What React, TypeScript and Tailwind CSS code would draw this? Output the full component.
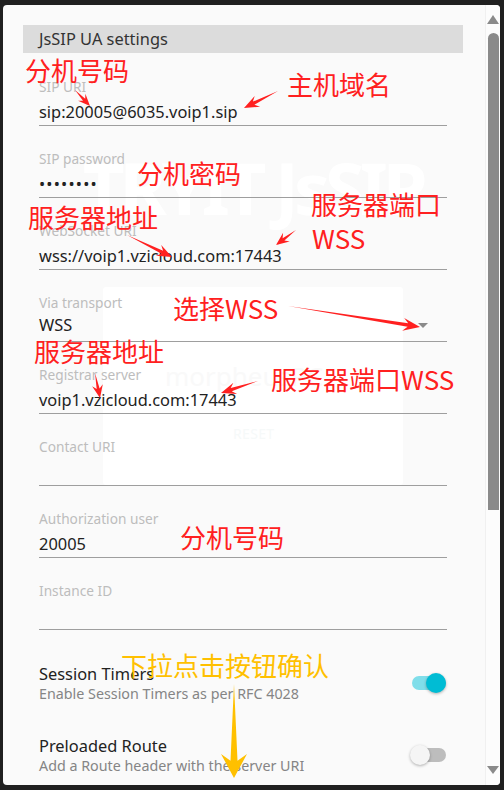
import React from "react";

const LATIN = { fontFamily: '"Noto Sans", "Liberation Sans", sans-serif' };
const CJK = { fontFamily: '"Noto Sans CJK SC", "Noto Sans", sans-serif' };

function arrowPoints(x1: number, y1: number, x2: number, y2: number, hl: number, hw: number, sw: number) {
  const dx = x2 - x1;
  const dy = y2 - y1;
  const len = Math.hypot(dx, dy);
  const ux = dx / len;
  const uy = dy / len;
  const nx = -uy;
  const ny = ux;
  const bx = x2 - ux * hl * 0.72;
  const by = y2 - uy * hl * 0.72;
  const hx = x2 - ux * hl;
  const hy = y2 - uy * hl;
  const pts = [
    [x1, y1],
    [bx + (nx * sw) / 2, by + (ny * sw) / 2],
    [hx + (nx * hw) / 2, hy + (ny * hw) / 2],
    [x2, y2],
    [hx - (nx * hw) / 2, hy - (ny * hw) / 2],
    [bx - (nx * sw) / 2, by - (ny * sw) / 2],
  ];
  return pts.map((p) => p[0].toFixed(1) + "," + p[1].toFixed(1)).join(" ");
}

const redArrows: [number, number, number, number, number, number, number][] = [
  [75, 90, 90, 106, 12, 10, 3],
  [278, 91, 244, 108, 15, 12, 3.5],
  [127, 235, 172, 257, 15, 12, 3.5],
  [296, 230, 276, 245, 13, 11, 3],
  [288, 306, 420, 327, 17, 13, 3.5],
  [95, 373, 100, 398, 13, 11, 3],
  [258, 381, 221, 393, 15, 12, 3.5],
];

function Field({ label, value, select, dots }: { label: string; value?: string; select?: boolean; dots?: boolean }) {
  return (
    <div className="relative flex h-[72px] flex-col border-b border-[#9e9e9e] pt-[25px]">
      <div className="h-[16px] whitespace-nowrap text-[13.7px] leading-[16px] text-[#bdbdbd]">{label}</div>
      {select ? (
        <div className="mt-[4px] flex h-[20px] items-center justify-between text-[16.4px] leading-[20px] text-[#222]">
          <span>{value}</span>
          <span className="mr-[19px] h-0 w-0 border-x-[5px] border-t-[5px] border-x-transparent border-t-[#8a8a8a]" />
        </div>
      ) : (
        <div
          className={
            "mt-[7px] h-[20px] whitespace-nowrap text-[16.4px] leading-[20px] text-[#222] " +
            (dots ? "tracking-[1.2px]" : "")
          }
        >
          {value}
        </div>
      )}
    </div>
  );
}

function Toggle({ on }: { on: boolean }) {
  return (
    <div className="relative mr-[1px] h-[20px] w-[36px]">
      <div className={"absolute left-[2px] top-[3px] h-[14px] w-[34px] rounded-full " + (on ? "bg-[#80deea]" : "bg-[#bdbdbd]")} />
      <div
        className={
          "absolute top-0 h-[20px] w-[20px] rounded-full shadow-[0_1px_3px_rgba(0,0,0,0.3)] " +
          (on ? "left-[16px] bg-[#00bcd4]" : "left-[0px] bg-[#f5f5f5]")
        }
      />
    </div>
  );
}

function SwitchRow({ title, sub, on }: { title: string; sub: string; on: boolean }) {
  return (
    <div className="flex h-[72px] items-start pt-[34px]">
      <div className="flex flex-1 flex-col">
        <div className="h-[20px] whitespace-nowrap text-[16.4px] leading-[20px] text-[#222]">{title}</div>
        <div className="mt-[1px] h-[18px] whitespace-nowrap text-[14.3px] leading-[18px] text-[#858585]">{sub}</div>
      </div>
      <div className="mt-[9px]">
        <Toggle on={on} />
      </div>
    </div>
  );
}

function Note({ x, y, text, color }: { x: number; y: number; text: string; color?: string }) {
  return (
    <span
      className={"absolute whitespace-nowrap text-[26px] leading-[26px] " + (color === "y" ? "text-[#ffc000]" : "text-[#ff2020]")}
      style={{ ...CJK, left: x - 1, top: y - 13 }}
    >
      {text}
    </span>
  );
}

export default function App() {
  return (
    <div className="relative h-[790px] w-[504px] overflow-hidden bg-[#202020] pb-[5px] pl-[3px] pr-[4px] pt-[5px]" style={LATIN}>
      <div className="relative flex h-full w-full overflow-hidden rounded-[4px] bg-[#fafafa]">
        {/* faint underlying page */}
        <div className="pointer-events-none absolute left-[100px] top-[282px] h-[198px] w-[300px] rounded-[3px] bg-white">
          <div className="absolute left-[62px] top-[70px] text-[26px] text-[#f9f9f9]">morpheusPC</div>
          <div className="absolute left-[130px] top-[136px] text-[14px] tracking-wide text-[#f6f9f9]">RESET</div>
        </div>
        <div className="pointer-events-none absolute left-[80px] top-[142px] whitespace-nowrap text-[72px] font-bold leading-[80px] tracking-[-5px] text-white">
          TRYIT JsSIP
        </div>

        <div className="relative flex flex-1 flex-col pl-[20px] pr-[22px] pt-[20px]">
          <div className="flex h-[28px] items-center bg-[#dcdcdc] pl-[16px] text-[16.4px] text-[#333]">JsSIP UA settings</div>
          <div className="ml-[16px] mr-[16px] mt-[1px] flex flex-col">
            <Field label="SIP URI" value="sip:20005@6035.voip1.sip" />
            <Field label="SIP password" value="••••••••" dots />
            <Field label="WebSocket URI" value="wss://voip1.vzicloud.com:17443" />
            <Field label="Via transport" value="WSS" select />
            <Field label="Registrar server" value="voip1.vzicloud.com:17443" />
            <Field label="Contact URI" value="" />
            <Field label="Authorization user" value="20005" />
            <Field label="Instance ID" value="" />
            <SwitchRow title="Session Timers" sub="Enable Session Timers as per RFC 4028" on />
            <SwitchRow title="Preloaded Route" sub="Add a Route header with the server URI" on={false} />
          </div>
        </div>

        {/* scrollbar */}
        <div className="relative flex w-[15px] flex-col items-center border-l border-[#f0f0f0] bg-[#fcfcfc]">
          <span className="mt-[10px] h-0 w-0 border-x-[6px] border-b-[9px] border-x-transparent border-b-[#8a8a8a]" />
          <div className="mt-[9px] h-[477px] w-[11px] rounded-t-full rounded-b-[6px] bg-[#8a8a8a]" />
          <div className="flex-1" />
          <span className="mb-[11px] h-0 w-0 border-x-[6px] border-t-[8px] border-x-transparent border-t-[#8a8a8a]" />
        </div>
      </div>

      {/* annotations */}
      <div className="pointer-events-none absolute inset-0">
        <svg className="absolute inset-0" width="504" height="790" viewBox="0 0 504 790">
          {redArrows.map((a, i) => (
            <polygon key={i} points={arrowPoints(a[0], a[1], a[2], a[3], a[4], a[5], a[6])} fill="#ff2020" />
          ))}
          <polygon points={arrowPoints(234, 684, 234, 778, 24, 26, 7)} fill="#ffc000" />
        </svg>
        <Note x={26} y={70} text="分机号码" />
        <Note x={288} y={84} text="主机域名" />
        <Note x={138} y={173} text="分机密码" />
        <Note x={312} y={204} text="服务器端口" />
        <Note x={313} y={238} text="WSS" />
        <Note x={29} y={217} text="服务器地址" />
        <Note x={174} y={308} text="选择WSS" />
        <Note x={35} y={351} text="服务器地址" />
        <Note x={272} y={379} text="服务器端口WSS" />
        <Note x={181} y={537} text="分机号码" />
        <Note x={122} y={665} text="下拉点击按钮确认" color="y" />
      </div>
    </div>
  );
}
